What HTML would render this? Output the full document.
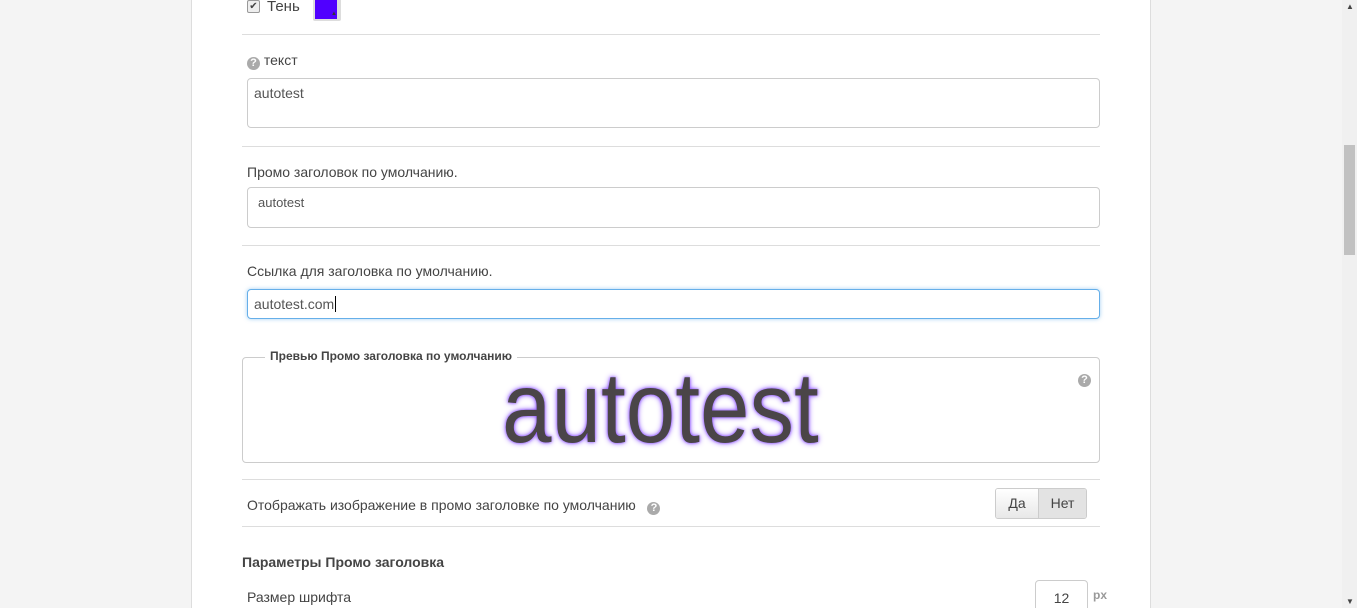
<!DOCTYPE html>
<html><head><meta charset="utf-8"><style>
html,body{margin:0;width:1357px;height:608px;overflow:hidden}
body{background:#f4f4f4;font-family:"Liberation Sans",sans-serif;color:#444;position:relative;font-size:14px}
.panel{position:absolute;left:191px;top:-2px;width:958px;height:610px;background:#fff;border-left:1px solid #ddd;border-right:1px solid #ddd}
.a{position:absolute}
.hr{position:absolute;left:242px;width:858px;height:1px;background:#ddd}
.inp{position:absolute;left:247px;width:853px;border:1px solid #ccc;border-radius:4px;background:#fff;box-sizing:border-box;color:#555}
.q{display:inline-block;width:13px;height:13px;border-radius:50%;background:#aaa;color:#fff;font-size:11px;font-weight:bold;text-align:center;line-height:13px;vertical-align:-1px}
</style></head><body>
<div class="panel"></div>
<div class="a" style="left:247px;top:0;width:11px;height:11px;border:1px solid #999;border-radius:2px;background:#eee;font-size:10px;line-height:11px;text-align:center">✔</div>
<div class="a" style="left:267px;top:-2px;font-size:15px">Тень</div>
<div class="a" style="left:313px;top:-2px;width:28px;height:23px;background:#ddd;border-radius:2px"></div>
<div class="a" style="left:315px;top:-2px;width:22px;height:21px;background:#5000ff"></div>
<div class="a" style="left:331px;top:11px;font-size:6px;color:#333">▲</div>
<div class="hr" style="top:34px"></div>
<div class="a" style="left:247px;top:52px"><span class="q">?</span> <span style="font-size:14px">текст</span></div>
<div class="inp" style="top:78px;height:50px;padding:6px 6px;font-size:14px">autotest</div>
<div class="hr" style="top:146px"></div>
<div class="a" style="left:247px;top:164px">Промо заголовок по умолчанию.</div>
<div class="inp" style="top:187px;height:41px;padding:7px 10px;font-size:13px">autotest</div>
<div class="hr" style="top:245px"></div>
<div class="a" style="left:247px;top:263px">Ссылка для заголовка по умолчанию.</div>
<div class="inp" style="top:289px;height:30px;padding:6px 6px;border-color:#66afe9;box-shadow:0 0 4px rgba(102,175,233,.6)">autotest.com<span style="border-left:1px solid #000;margin-left:1px"></span></div>
<div class="a" style="left:242px;top:357px;width:856px;height:104px;border:1px solid #ccc;border-radius:4px"></div>
<div class="a" style="left:265px;top:349px;background:#fff;padding:0 5px;font-size:12px;font-weight:bold">Превью Промо заголовка по умолчанию</div>
<div class="a" style="left:1078px;top:369px"><span class="q">?</span></div>
<div class="a" style="left:502px;top:358px;font-size:100px;line-height:100px;color:#4a4548;transform:scaleX(.89);transform-origin:0 0;text-shadow:0 0 6px #8a4dff,0 0 3px #a070ff">autotest</div>
<div class="hr" style="top:479px"></div>
<div class="a" style="left:247px;top:497px">Отображать изображение в промо заголовке по умолчанию &nbsp; <span class="q">?</span></div>
<div class="a" style="left:995px;top:488px;width:90px;height:29px;border:1px solid #ccc;border-radius:3px;overflow:hidden;display:flex;font-size:14px">
<div style="width:42px;text-align:center;line-height:29px;background:linear-gradient(#fff,#e8e8e8)">Да</div>
<div style="flex:1;text-align:center;line-height:29px;background:#e3e3e3;border-left:1px solid #ccc">Нет</div></div>
<div class="hr" style="top:526px"></div>
<div class="a" style="left:242px;top:554px;font-weight:bold">Параметры Промо заголовка</div>
<div class="a" style="left:247px;top:589px">Размер шрифта</div>
<div class="a" style="left:1035px;top:580px;width:51px;height:34px;border:1px solid #ccc;border-radius:4px;text-align:center;line-height:34px;font-size:14px">12</div>
<div class="a" style="left:1093px;top:588px;font-size:12px;color:#999;font-weight:bold">px</div>
<div class="a" style="left:1342px;top:0;width:15px;height:608px;background:#f0f0f0"></div>
<div class="a" style="left:1344px;top:145px;width:11px;height:110px;background:#c1c1c1"></div>
<div class="a" style="left:1346px;top:2px;font-size:8px;color:#444">▲</div>
<div class="a" style="left:1346px;top:597px;font-size:8px;color:#444">▼</div>
</body></html>
